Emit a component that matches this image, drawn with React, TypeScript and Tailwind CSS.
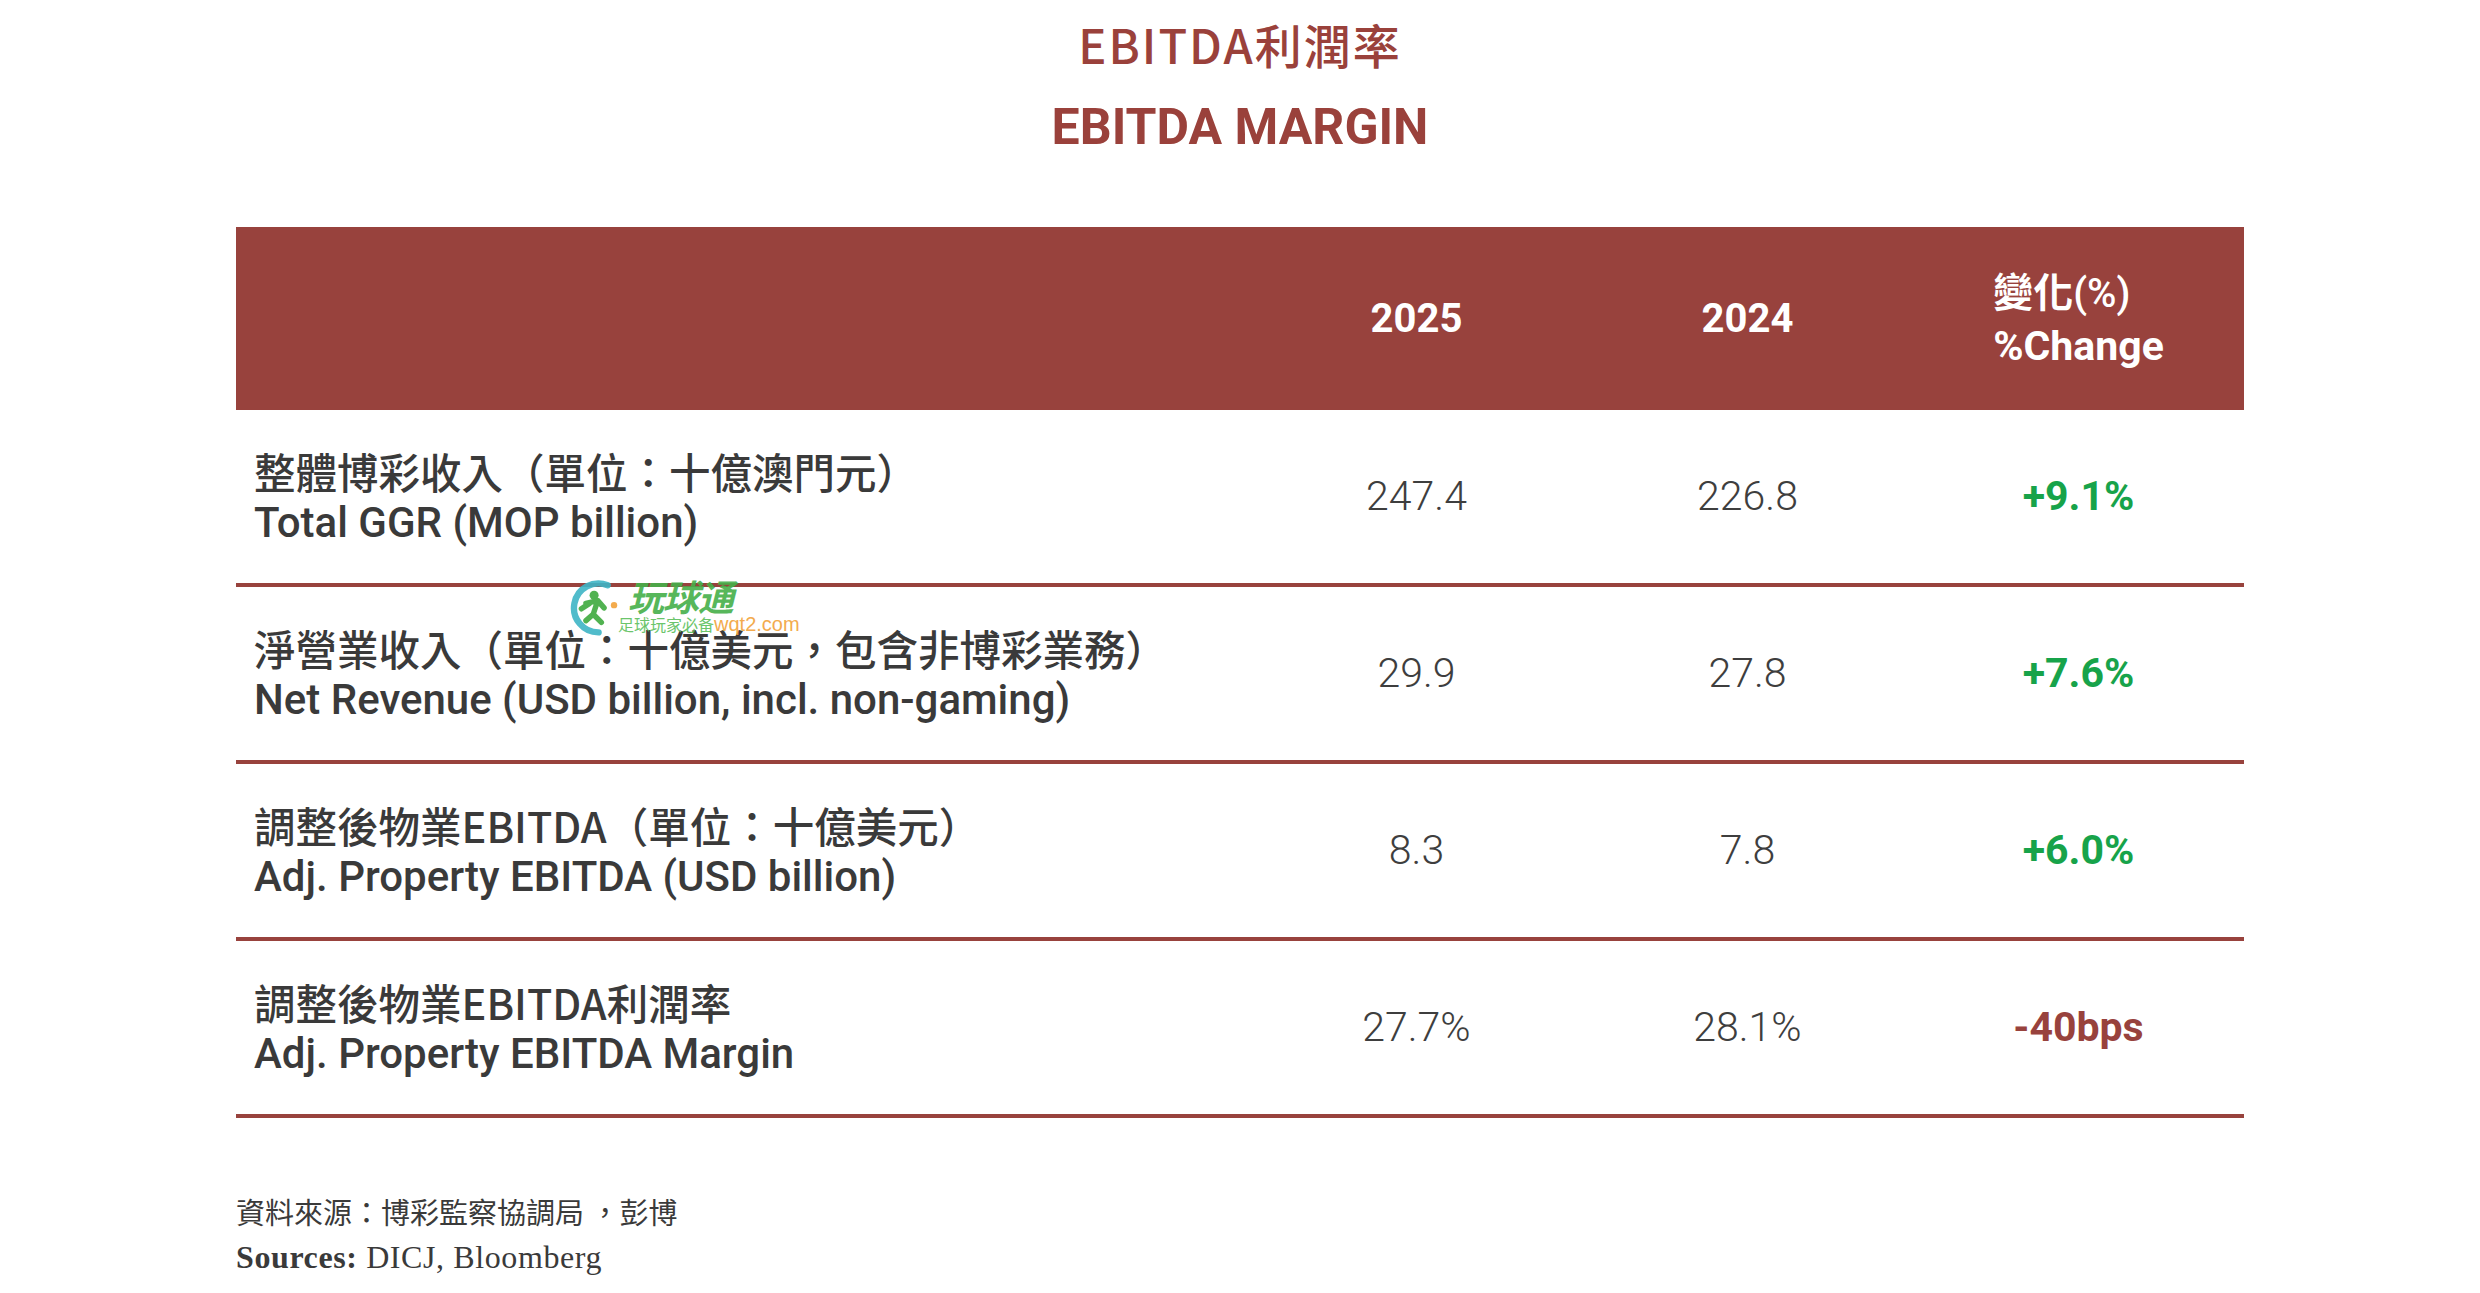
import React from "react";

type Row = {
  zh: string;
  en: string;
  y25: string;
  y24: string;
  chg: string;
  pos: boolean;
};

const rows: Row[] = [
  {
    zh: "整體博彩收入（單位：十億澳門元）",
    en: "Total GGR (MOP billion)",
    y25: "247.4",
    y24: "226.8",
    chg: "+9.1%",
    pos: true,
  },
  {
    zh: "淨營業收入（單位：十億美元，包含非博彩業務）",
    en: "Net Revenue (USD billion, incl. non-gaming)",
    y25: "29.9",
    y24: "27.8",
    chg: "+7.6%",
    pos: true,
  },
  {
    zh: "調整後物業EBITDA（單位：十億美元）",
    en: "Adj. Property EBITDA (USD billion)",
    y25: "8.3",
    y24: "7.8",
    chg: "+6.0%",
    pos: true,
  },
  {
    zh: "調整後物業EBITDA利潤率",
    en: "Adj. Property EBITDA Margin",
    y25: "27.7%",
    y24: "28.1%",
    chg: "-40bps",
    pos: false,
  },
];

const CJK = "font-['Noto_Sans_CJK_TC','Noto_Sans_CJK_SC',sans-serif]";
const LAT = "font-['Roboto','Noto_Sans_CJK_TC',sans-serif]";

function Watermark() {
  return (
    <div className="absolute left-[566px] top-[576px] w-[240px] h-[62px] opacity-90 pointer-events-none">
      <svg className="absolute left-0 top-[2px]" width="58" height="58" viewBox="0 0 64 64">
        <path
          d="M46 8 A27 27 0 1 0 36 60"
          fill="none"
          stroke="#3fb5c6"
          strokeWidth="7"
          strokeLinecap="round"
        />
        <circle cx="31" cy="19" r="5" fill="#3faa3f" />
        <path
          d="M22 28 L35 25 L42 33 M35 25 L30 40 L39 49 M30 40 L22 47 M26 28 L17 34"
          fill="none"
          stroke="#3faa3f"
          strokeWidth="6"
          strokeLinecap="round"
          strokeLinejoin="round"
        />
        <circle cx="53" cy="30" r="3.5" fill="#f2a33a" />
      </svg>
      <span className="absolute left-[62px] top-[0px] italic font-bold text-[36px] leading-[38px] tracking-[-1px] text-[#45b04a] font-['Noto_Sans_CJK_SC',sans-serif] whitespace-nowrap">
        玩球通
      </span>
      <span className="absolute left-[52px] top-[38px] flex items-baseline whitespace-nowrap">
        <span className="text-[16px] leading-[20px] text-[#5cbf5c] font-['Noto_Sans_CJK_SC',sans-serif]">
          足球玩家必备
        </span>
        <span className="text-[20px] leading-[20px] text-[#f2a33a] font-['Liberation_Sans',sans-serif]">
          wqt2.com
        </span>
      </span>
    </div>
  );
}

export default function App() {
  return (
    <div className="relative w-[2480px] h-[1293px] bg-white overflow-hidden">
      <div className="w-[2008px] mx-auto flex flex-col">
        {/* Titles */}
        <div className="pt-[20px] flex flex-col items-center">
          <div
            className={`${CJK} font-medium text-[47px] leading-[47px] text-[#9a413b] tracking-[2px]`}
          >
            EBITDA利潤率
          </div>
          <div
            className={`${LAT} font-bold text-[50px] leading-[50px] mt-[35px] text-[#9a413b]`}
          >
            EBITDA MARGIN
          </div>
        </div>

        {/* Table */}
        <div className="mt-[75px] flex flex-col">
          <div className="grid grid-cols-[1015px_331px_331px_331px] h-[183px] bg-[#98423d] text-white">
            <div />
            <div className={`flex items-center justify-center ${LAT} font-bold text-[40px]`}>
              2025
            </div>
            <div className={`flex items-center justify-center ${LAT} font-bold text-[40px]`}>
              2024
            </div>
            <div className="flex items-center justify-center">
              <div className="flex flex-col text-left">
                <span className={`${CJK} font-bold text-[40px] leading-[53px]`}>
                  變化<span className={`${LAT} font-medium`}>(%)</span>
                </span>
                <span className={`${LAT} font-bold text-[41px] leading-[53px]`}>%Change</span>
              </div>
            </div>
          </div>

          {rows.map((r) => (
            <div
              key={r.en}
              className="grid grid-cols-[1015px_331px_331px_331px] h-[177px] border-b-4 border-[#98423d]"
            >
              <div className="flex flex-col justify-center pl-[18px] text-[#3a3a3a]">
                <span className={`${CJK} font-medium text-[41.5px] leading-[52px] whitespace-nowrap`}>
                  {r.zh}
                </span>
                <span className={`${LAT} font-medium text-[42px] leading-[52px] whitespace-nowrap`}>
                  {r.en}
                </span>
              </div>
              <div
                className={`flex items-center justify-center ${LAT} font-light text-[41px] text-[#3e3e3e]`}
              >
                {r.y25}
              </div>
              <div
                className={`flex items-center justify-center ${LAT} font-light text-[41px] text-[#3e3e3e]`}
              >
                {r.y24}
              </div>
              <div
                className={`flex items-center justify-center ${LAT} font-bold text-[41px] ${
                  r.pos ? "text-[#17a34a]" : "text-[#98423d]"
                }`}
              >
                {r.chg}
              </div>
            </div>
          ))}
        </div>

        {/* Footer */}
        <div className="mt-[79px] flex flex-col text-[#3a3a3a]">
          <div className={`${CJK} text-[29px] leading-[29px]`}>資料來源：博彩監察協調局 ，彭博</div>
          <div className="mt-[15px] font-['Liberation_Serif',serif] text-[32px] leading-[32px] tracking-[0.6px]">
            <span className="font-bold">Sources:</span> DICJ, Bloomberg
          </div>
        </div>
      </div>

      <Watermark />
    </div>
  );
}
